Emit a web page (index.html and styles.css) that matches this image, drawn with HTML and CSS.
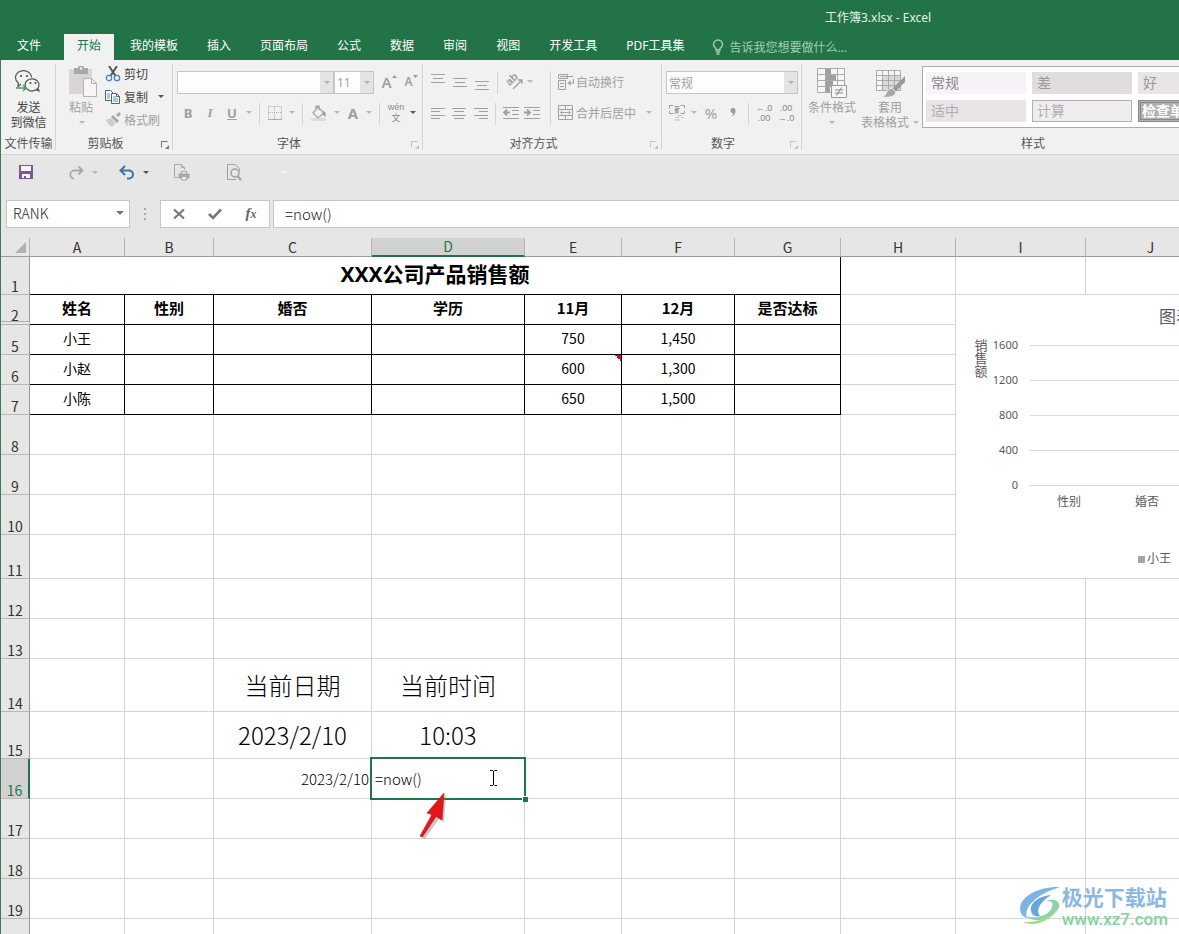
FILE: index.html
```html
<!DOCTYPE html>
<html lang="zh-CN">
<head>
<meta charset="utf-8">
<title>工作簿3.xlsx - Excel</title>
<link rel="stylesheet" href="styles.css">
</head>
<body>
<div class="app">
  <header class="titlebar">
    <div class="title">工作簿3.xlsx - Excel</div>
    <nav class="tabs">
      <button class="tab file">文件</button>
      <button class="tab active">开始</button>
      <button class="tab">我的模板</button>
      <button class="tab">插入</button>
      <button class="tab">页面布局</button>
      <button class="tab">公式</button>
      <button class="tab">数据</button>
      <button class="tab">审阅</button>
      <button class="tab">视图</button>
      <button class="tab">开发工具</button>
      <button class="tab">PDF工具集</button>
      <button class="tellme">
        <svg width="12" height="16" viewBox="0 0 12 16" fill="none" stroke="#a6cdb5" stroke-width="1.4"><path d="M4 11V9.500C2 8 1.500 7 1.500 5.500a4.500 4.500 0 0 1 9 0c0 1.500-.5 2.500-2.500 4V11zM4 13h4M4.500 15h3"/></svg>
        告诉我您想要做什么...
      </button>
    </nav>
  </header>

  <main class="body">
    <section class="ribbon">
      <div class="group g-wechat">
        <div class="tools">
          <button class="big on">
            <svg width="28" height="26" viewBox="0 0 28 26" fill="none" stroke="#555" stroke-width="1.200"><path d="M7 15l-3 2.500.4-3.500A8 7 0 1 1 17.500 8.500"/><path d="M13 20a7 6 0 1 1 9 .8l3 1.200-1.200-2.700M13 20a7 6 0 0 0 9 .8"/><path d="M2 19h10M9 16l3 3-3 3" stroke="#4a9c6d" stroke-width="1.500"/><g fill="#444" stroke="none"><circle cx="7" cy="7" r="1"/><circle cx="13" cy="7" r="1"/><circle cx="16.500" cy="14" r="1"/><circle cx="21.500" cy="14" r="1"/></g></svg>
            <span>发送</span><span>到微信</span>
          </button>
        </div>
        <footer><span>文件传输</span></footer>
      </div>

      <div class="group g-clip">
        <div class="tools">
          <button class="big paste">
            <svg width="28" height="32" viewBox="0 0 28 32"><path d="M0 3h23v25H0z" fill="#d8d4d8"/><path d="M5 2h4a3 3 0 0 1 6 0h4v6H5z" fill="#a8a8a8"/><circle cx="12" cy="2.500" r="1.200" fill="#f1f1f1"/><path d="M14.500 12.500h8l5 5v13h-13zM22.500 12.500v5h5" fill="#f8f4f8" stroke="#b5b0b5"/></svg>
            <span>粘贴</span><i class="caret"></i>
          </button>
          <div class="stack">
            <button class="line on"><svg width="16" height="16" viewBox="0 0 16 16" fill="none"><path d="M4 0l6.500 10M12 0L5.500 10" stroke="#555" stroke-width="2"/><circle cx="4" cy="12" r="2.700" stroke="#4a80c8" stroke-width="1.300"/><circle cx="12" cy="12" r="2.700" stroke="#4a80c8" stroke-width="1.300"/></svg>剪切</button>
            <button class="line on"><svg width="16" height="16" viewBox="0 0 16 16" fill="#fff" stroke="#56626e"><path d="M.5 1.500h5l3 3v7h-8z"/><path d="M6.500 4.500h5l3 3v7h-8zM11.500 4.500v3h3"/><path d="M2 5h3M2 7h3M2 9h3M8 8h3M8 10h5M8 12h5" stroke="#5b8cc8"/></svg>复制<i class="caret copycaret"></i></button>
            <button class="line"><svg width="16" height="16" viewBox="0 0 16 16"><path d="M1 8l5-2 5 5-4 4c-2-1-4-3-6-7z" fill="#d0ccd0"/><path d="M6 5l2-2 6 6-2 2zM11 3l3-3 2 2-3 3z" fill="#a6a6a6"/></svg>格式刷</button>
          </div>
        </div>
        <footer><span>剪贴板</span><button class="launch on" aria-label="剪贴板设置"></button></footer>
      </div>

      <div class="group g-font">
        <div class="rows">
          <div class="row">
            <div class="combo fontname"><input aria-label="字体"><i class="drop"></i></div>
            <div class="combo fontsize"><input aria-label="字号" value="11"><i class="drop"></i></div>
            <button class="ic w22 grow">A<svg width="5" height="3" viewBox="0 0 5 3"><path d="M0 3L2.500 0 5 3z" fill="#999"/></svg></button>
            <button class="ic w22 grow small">A<svg width="5" height="3" viewBox="0 0 5 3"><path d="M0 0h5L2.500 3z" fill="#999"/></svg></button>
          </div>
          <div class="row">
            <button class="ic w22 b">B</button><button class="ic w22 it">I</button><button class="ic w22 u">U</button><button class="ic w12"><i class="caret"></i></button>
            <i class="sep"></i>
            <button class="ic w22"><svg width="14" height="14" viewBox="0 0 14 14" fill="none" stroke="#aaa"><path d="M.5 .5h13v13H.5zM6.500 0v14M0 6.500h14" stroke-dasharray="1 1"/><path d="M0 13.500h14"/></svg></button><button class="ic w12"><i class="caret"></i></button>
            <i class="sep"></i>
            <button class="ic w24"><svg width="16" height="16" viewBox="0 0 16 16" fill="none"><path d="M0 13h15v3H0z" fill="#dedade"/><path d="M7 2l6 6-6 5-5-5zM5 5V1h3v4" stroke="#a0a0a0" stroke-width="1.200"/><path d="M12 6c3 1 3 3 2.500 6L11 9z" fill="#a0a0a0"/></svg></button><button class="ic w12"><i class="caret"></i></button>
            <button class="ic w20 fc">A</button><button class="ic w12"><i class="caret"></i></button>
            <i class="sep"></i>
            <button class="ic w24 pinyin"><span>wén</span><span>文</span></button><button class="ic w10 on"><i class="caret"></i></button>
          </div>
        </div>
        <footer><span>字体</span><button class="launch" aria-label="字体设置"></button></footer>
      </div>

      <div class="group g-align">
        <div class="tools">
          <div class="rows narrow">
            <div class="row">
              <button class="ic w22"><svg width="14" height="16" viewBox="0 0 14 16" stroke="#a0a0a0"><path d="M0 .5h14M2 4.500h10M0 8.500h14"/></svg></button><button class="ic w22"><svg width="14" height="16" viewBox="0 0 14 16" stroke="#a0a0a0"><path d="M0 4.500h14M2 8.500h10M0 12.500h14"/></svg></button><button class="ic w22"><svg width="14" height="16" viewBox="0 0 14 16" stroke="#a0a0a0"><path d="M0 7.500h14M2 11.500h10M0 15.500h14"/></svg></button>
              <i class="sep"></i>
              <button class="ic w22 orient"><span>ab</span><svg width="11" height="11" viewBox="0 0 11 11" fill="none" stroke="#a0a0a0" stroke-width="1.300"><path d="M1 10l9-9M6 1h4v4"/></svg></button><button class="ic w12"><i class="caret"></i></button>
            </div>
            <div class="row">
              <button class="ic w22"><svg width="14" height="16" viewBox="0 0 14 16" stroke="#a0a0a0"><path d="M0 3.500h14M0 6.500h9M0 10.500h14M0 13.500h9"/></svg></button><button class="ic w22"><svg width="14" height="16" viewBox="0 0 14 16" stroke="#a0a0a0"><path d="M0 3.500h14M2 6.500h10M0 10.500h14M2 13.500h10"/></svg></button><button class="ic w22"><svg width="14" height="16" viewBox="0 0 14 16" stroke="#a0a0a0"><path d="M0 3.500h14M5 6.500h9M0 10.500h14M5 13.500h9"/></svg></button>
              <i class="sep"></i>
              <button class="ic w22"><svg width="16" height="14" viewBox="0 0 16 14" stroke="#a0a0a0" fill="none"><path d="M0 1.500h16M9 4.500h7M9 8.500h7M0 12.500h16"/><path d="M7 6.500H1M4 3.500l-3 3 3 3" stroke-width="1.800"/></svg></button><button class="ic w22"><svg width="16" height="14" viewBox="0 0 16 14" stroke="#a0a0a0" fill="none"><path d="M0 1.500h16M9 4.500h7M9 8.500h7M0 12.500h16"/><path d="M0 6.500h6M3 3.500l3 3-3 3" stroke-width="1.800"/></svg></button>
            </div>
          </div>
          <i class="sep tall"></i>
          <div class="rows text">
            <button class="line"><svg width="16" height="16" viewBox="0 0 16 16" fill="none" stroke="#a0a0a0"><path d="M.5 .5h9v4h-9zM.5 6.500h7v9h-7zM2 2.500h13M2 9.500h4M2 12.500h4"/><path d="M15.500 5v4h-5M12.500 7l-2 2 2 2" stroke-width="1.200"/></svg>自动换行</button>
            <button class="line"><svg width="16" height="16" viewBox="0 0 16 16" fill="none" stroke="#a8a0a8"><path d="M.5 .5h14v14H.5zM.5 4.500h14M.5 10.500h14M7.500 .5v4M7.500 10.500v4M2.500 7.500h10M4.500 5.500l-2 2 2 2M10.500 5.500l2 2-2 2"/></svg>合并后居中<i class="caret mergecaret"></i></button>
          </div>
        </div>
        <footer><span>对齐方式</span><button class="launch" aria-label="对齐设置"></button></footer>
      </div>

      <div class="group g-num">
        <div class="rows">
          <div class="row">
            <div class="combo numfmt"><input aria-label="数字格式" value="常规"><i class="drop"></i></div>
          </div>
          <div class="row">
            <button class="ic w22"><svg width="16" height="16" viewBox="0 0 16 16" fill="none" stroke="#a0a0a0"><path d="M4.500 .5h-4v3M11.500 .5h4v3M.5 6v2.500h4M15.500 6v2.500h-4"/><path d="M5.500 1.500h5M5.500 8h3" /><path d="M10.500 3.500H7v3.500h3M5.500 5h4" stroke-width="1.500"/><path d="M9 10.500h4M12 12.500h3M6 12.500h4M5 15h6" stroke="#c4c4c4"/></svg></button><button class="ic w12"><i class="caret"></i></button>
            <button class="ic w22 pct">%</button><button class="ic w22" aria-label="千位分隔样式"><svg width="6" height="9" viewBox="0 0 6 9" fill="#999"><path d="M3 0a2.500 2.500 0 0 1 2.500 3C5.500 6 3.500 8 1 8.500 2.500 7.500 3 6.500 3 5A2.500 2.500 0 0 1 3 0z"/></svg></button>
            <i class="sep"></i>
            <button class="ic w22 dec"><span>←.0</span><span>.00</span></button><button class="ic w22 dec"><span>.00</span><span>→.0</span></button>
          </div>
        </div>
        <footer><span>数字</span><button class="launch" aria-label="数字设置"></button></footer>
      </div>

      <div class="group g-style">
        <div class="tools">
          <button class="big cond">
            <svg width="31" height="31" viewBox="0 0 31 31" fill="none" stroke="#aaa"><path d="M.5 .5h27v24H.5zM.5 6.500h27M.5 12.500h27M.5 18.500h27M8.500 .5v24M20.500 .5v24" fill="#f8f5f8"/><path d="M9 1h5v5H9zM9 7h10v5H9zM9 13h7v5H9zM9 19h4v5H9z" fill="#a0a0a0" stroke="none"/><path d="M14.500 17.500h15v12h-15z" fill="#f8f5f8" stroke="#999"/><path d="M18 22h8M18 25h8M24.500 19.500l-5 8" stroke="#888"/></svg>
            <span>条件格式</span><i class="caret"></i>
          </button>
          <button class="big tablefmt">
            <svg width="31" height="31" viewBox="0 0 31 31" fill="none" stroke="#aaa"><path d="M1.500 2.500h24v20h-24z" fill="#f8f5f8"/><path d="M8 8h18v15H8z" fill="#dcd8dc" stroke="none"/><path d="M1.500 2.500h24v20h-24zM1.500 7.500h24M1.500 12.500h24M1.500 17.500h24M7.500 2.500v20M13.500 2.500v20M19.500 2.500v20"/><path d="M30 8v6L20 24l-3-3z" fill="#999" stroke="none"/><path d="M17 20l4 4c-1 5-8 6-13 5 4-2 3-8 9-9z" fill="#a8a8a8" stroke="#f1f1f1"/></svg>
            <span>套用</span><span class="withcaret">表格格式<i class="caret"></i></span>
          </button>
          <div class="gallery">
            <button class="st plain">常规</button><button class="st bad">差</button><button class="st good">好</button>
            <button class="st mid">适中</button><button class="st calc">计算</button><button class="st check">检查单元格</button>
          </div>
        </div>
        <footer><span>样式</span></footer>
      </div>
    </section>

    <section class="qat">
      <button class="q q1" aria-label="保存"><svg width="16" height="16" viewBox="0 0 16 16"><path d="M1 1h14v14H1z" fill="#7a55a0"/><path d="M3 2h10v5H3zM4 10h8v4H4z" fill="#f7f3fa"/><path d="M6 12h2v3H6z" fill="#7a55a0"/></svg></button>
      <button class="q q2" aria-label="恢复"><svg width="15" height="15" viewBox="0 0 15 15" fill="none" stroke="#a8a8a8" stroke-width="1.800"><path d="M13 5.500H6a4 4 0 0 0-1 8.200M9.500 1.500l4 4-4 4"/></svg><i class="caret"></i></button>
      <button class="q q3 on" aria-label="撤消"><svg width="16" height="15" viewBox="0 0 16 15" fill="none" stroke="#3d74ad" stroke-width="2"><path d="M2 5.500h7.500a4 4 0 0 1 1 8H8M6 1L1.500 5.500 6 10"/></svg><i class="caret"></i></button>
      <button class="q q4" aria-label="快速打印"><svg width="17" height="17" viewBox="0 0 17 17" fill="none" stroke="#a8a8a8"><path d="M5 13.500H1.500V.5h7l3 3V6M8.500 .5v3h3"/><path d="M6 10h10v4H6z" fill="#a8a8a8"/><path d="M8.500 7.500h5V10h-5zM8.500 12.500h5v3.500h-5z" fill="#eee"/></svg></button>
      <button class="q q5" aria-label="打印预览"><svg width="16" height="17" viewBox="0 0 16 17" fill="none" stroke="#a0a0a0"><path d="M12.500 7V4.500l-4-4h-8v15h9"/><circle cx="8" cy="9" r="4" stroke-width="1.500"/><path d="M10.500 12l3.500 4" stroke-width="2"/></svg></button>
      <button class="q q6" aria-label="自定义快速访问工具栏"><i class="caret"></i></button>
    </section>

    <section class="fbar">
      <div class="namebox"><input aria-label="名称框" value="RANK"><i class="caret"></i></div>
      <svg class="dots" width="4" height="12" viewBox="0 0 4 12" fill="#aaa"><path d="M1 0h2v2H1zM1 5h2v2H1zM1 10h2v2H1z"/></svg>
      <div class="fbtns">
        <button aria-label="取消"><svg width="12" height="12" viewBox="0 0 12 12" stroke="#777" stroke-width="2.200"><path d="M1 1.500l10 9M11 1.500l-10 9"/></svg></button>
        <button aria-label="输入"><svg width="14" height="12" viewBox="0 0 14 12" fill="none" stroke="#777" stroke-width="2.600"><path d="M1 6l4 4 8-8.500"/></svg></button>
        <button aria-label="插入函数" class="fx">f<sub>x</sub></button>
      </div>
      <input class="formula" aria-label="编辑栏" value="=now()">
    </section>

    <section class="sheet">
      <table class="grid">
        <colgroup><col class="c0"><col class="cA"><col class="cB"><col class="cC"><col class="cD"><col class="cE"><col class="cF"><col class="cG"><col class="cH"><col class="cI"><col class="cI"></colgroup>
        <thead>
          <tr><th class="corner"><svg width="11" height="11" viewBox="0 0 11 11"><path d="M11 0v11H0z" fill="#b0b0b0"/></svg></th><th>A</th><th>B</th><th>C</th><th class="sel">D</th><th>E</th><th>F</th><th>G</th><th>H</th><th>I</th><th>J</th></tr>
        </thead>
        <tbody>
          <tr class="data h38"><th>1</th><td colspan="7" class="headline">XXX公司产品销售额</td><td></td><td></td><td></td></tr>
          <tr class="data heads"><th class="hiddenrows">2</th><td>姓名</td><td>性别</td><td>婚否</td><td>学历</td><td>11月</td><td>12月</td><td>是否达标</td><td class="free"></td><td class="free"></td><td class="free"></td></tr>
          <tr class="data"><th>5</th><td>小王</td><td></td><td></td><td></td><td>750</td><td>1,450</td><td></td><td class="free"></td><td class="free"></td><td class="free"></td></tr>
          <tr class="data"><th>6</th><td>小赵</td><td></td><td></td><td></td><td class="noted">600</td><td>1,300</td><td></td><td class="free"></td><td class="free"></td><td class="free"></td></tr>
          <tr class="data"><th>7</th><td>小陈</td><td></td><td></td><td></td><td>650</td><td>1,500</td><td></td><td class="free"></td><td class="free"></td><td class="free"></td></tr>
          <tr><th>8</th><td></td><td></td><td></td><td></td><td></td><td></td><td></td><td></td><td></td><td></td></tr>
          <tr><th>9</th><td></td><td></td><td></td><td></td><td></td><td></td><td></td><td></td><td></td><td></td></tr>
          <tr><th>10</th><td></td><td></td><td></td><td></td><td></td><td></td><td></td><td></td><td></td><td></td></tr>
          <tr class="h44"><th>11</th><td></td><td></td><td></td><td></td><td></td><td></td><td></td><td></td><td></td><td></td></tr>
          <tr><th>12</th><td></td><td></td><td></td><td></td><td></td><td></td><td></td><td></td><td></td><td></td></tr>
          <tr><th>13</th><td></td><td></td><td></td><td></td><td></td><td></td><td></td><td></td><td></td><td></td></tr>
          <tr class="h53 large"><th>14</th><td></td><td></td><td>当前日期</td><td>当前时间</td><td></td><td></td><td></td><td></td><td></td><td></td></tr>
          <tr class="h47 large"><th>15</th><td></td><td></td><td>2023/2/10</td><td>10:03</td><td></td><td></td><td></td><td></td><td></td><td></td></tr>
          <tr class="cur"><th class="selrow">16</th><td></td><td></td><td class="right">2023/2/10</td><td class="editing"><div class="editbox"><input aria-label="D16" value="=now()"><i class="handle"></i>
            <svg class="ibeam" width="9" height="16" viewBox="0 0 9 16" fill="none" stroke="#000"><path d="M1 .5h2.500l1 1 1-1H8M1 15.500h2.500l1-1 1 1H8M4.500 1v14"/></svg>
            <svg class="pointer" width="34" height="54" viewBox="0 0 34 54"><path d="M26 3L10 23l5 2L2 46l3 1 14-20 5 3z" fill="#888" opacity=".45" transform="translate(2 2)"/><path d="M26 3L9 23l5 1.500L2 46l2.500 1L18 26.500l6 3.500z" fill="#e8151b" stroke="#b01016" stroke-width=".6"/></svg></div></td><td></td><td></td><td></td><td></td><td></td><td></td></tr>
          <tr><th>17</th><td></td><td></td><td></td><td></td><td></td><td></td><td></td><td></td><td></td><td></td></tr>
          <tr><th>18</th><td></td><td></td><td></td><td></td><td></td><td></td><td></td><td></td><td></td><td></td></tr>
          <tr><th>19</th><td></td><td></td><td></td><td></td><td></td><td></td><td></td><td></td><td></td><td></td></tr>
          <tr><th></th><td></td><td></td><td></td><td></td><td></td><td></td><td></td><td></td><td></td><td></td></tr>
        </tbody>
      </table>

      <figure class="chart">
        <figcaption>图表标题</figcaption>
        <div class="plot">
          <div class="ytitle">销售额</div>
          <div class="axis">
            <div class="tick"><span>1600</span><i></i></div>
            <div class="tick"><span>1200</span><i></i></div>
            <div class="tick"><span>800</span><i></i></div>
            <div class="tick"><span>400</span><i></i></div>
            <div class="tick"><span>0</span><i></i></div>
          </div>
        </div>
        <div class="cats"><span>性别</span><span>婚否</span></div>
        <div class="legend"><i></i>小王</div>
      </figure>
    </section>
  </main>

  <aside class="mark">
    <svg width="42" height="40" viewBox="0 0 42 40" fill="none"><path d="M41 1C22 0 2 9 1 22c0 6 3 9 7 10C4 21 18 8 41 1z" fill="#7db4e6"/><path d="M32 9C20 10 11 17 12 24c0 5 4 7 9 6-5-6 1-15 11-21z" fill="#6aa6de"/><path d="M27 15c5 0 8 1 6 6-2 6-8 9-15 10-4 .6-8 0-11-1 6 8 28 4 33-9 2-6-6-9-13-6z" fill="#8fd0b0"/><path d="M4 36c11 5 28 0 35-14-5 8-20 15-35 14z" fill="#a4d98a"/></svg>
    <div><strong>极光下载站</strong><span>www.xz7.com</span></div>
  </aside>
</div>
</body>
</html>
```

FILE: styles.css
```css
* { box-sizing: border-box; }
body {
  margin: 0;
  font-family: "Noto Sans", "Noto Sans CJK SC", sans-serif;
  font-size: 12px;
  color: #444;
  overflow: hidden;
}
button { font: inherit; color: inherit; background: none; border: 0; padding: 0; margin: 0; }
input { font: inherit; color: inherit; border: 0; padding: 0; margin: 0; background: none; outline: 0; min-width: 0; }
svg { display: block; flex: none; }

.app { position: relative; height: 100vh; display: flex; flex-direction: column; overflow: hidden; background: #e6e6e6; }

/* title bar and tabs */
.titlebar { flex: none; background: #227447; color: #fff; }
.title { height: 34px; line-height: 36px; padding-left: 825px; white-space: nowrap; color: #e6f2ea; }
.tabs { display: flex; gap: 3px; height: 26px; padding-left: 4px; }
.tab { padding: 0 13px 2px; line-height: 22px; white-space: nowrap; }
.tab.file { margin-right: 7px; }
.tab.active { background: #f1f1f1; color: #227447; }
.tellme { display: flex; align-items: center; gap: 5px; padding-left: 12px; color: #a6cdb5; white-space: nowrap; }

.body { flex: 1; min-height: 0; display: flex; flex-direction: column; border-left: 1px solid #3f7a58; }

/* ribbon */
.ribbon { flex: none; display: flex; height: 95px; background: #f1f1f1; border-bottom: 1px solid #d2d2d2; overflow: hidden; }
.group { flex: none; position: relative; display: flex; flex-direction: column; padding-top: 6px; color: #a0a0a0; }
.group::after { content: ""; position: absolute; right: 0; top: 4px; bottom: 4px; width: 1px; background: #d5d5d5; }
.group footer { margin-top: auto; height: 20px; display: flex; justify-content: center; position: relative; line-height: 20px; color: #555; white-space: nowrap; }
.on { color: #444; }
.g-wechat { width: 55px; }
.g-clip { width: 117px; }
.g-clip footer { padding-right: 18px; }
.g-font { width: 250px; padding-left: 4px; }
.g-font footer { padding-right: 22px; }
.g-align { width: 239px; }
.g-align footer { padding-right: 18px; }
.g-num { width: 140px; padding-left: 4px; }
.g-num footer { padding-right: 22px; }
.g-style { width: 462px; }
.tools { display: flex; }
.g-wechat .tools { justify-content: center; }
.big { display: flex; flex-direction: column; align-items: center; line-height: 15px; white-space: nowrap; }
.big.on svg { margin: 3px 0 5px; }
.caret { display: inline-block; flex: none; border: 3px solid transparent; border-top-color: #b8b8b8; border-bottom: 0; }
.on .caret { border-top-color: #555; }
.big > .caret { margin-top: 6px; }
.paste { margin-left: 13px; width: 28px; align-items: flex-start; }
.paste svg { margin-bottom: 2px; }
.paste > .caret { margin-left: 10px; }
.stack { margin: -4px 0 0 8px; }
.line { display: flex; align-items: center; gap: 3px; height: 23px; white-space: nowrap; }
.copycaret { margin-left: 7px; }
.mergecaret { margin-left: 8px; }
.launch { position: absolute; right: 5px; top: 7px; width: 7px; height: 7px; border: 1px solid #c4c4c4; border-right-color: transparent; border-bottom-color: transparent; color: #c4c4c4; }
.launch::after { content: ""; position: absolute; left: 3px; top: 3px; border: 2px solid currentColor; border-top-color: transparent; border-left-color: transparent; }
.launch.on { border-left-color: #777; border-top-color: #777; color: #777; }

.rows { display: flex; flex-direction: column; gap: 8px; padding-top: 5px; }
.row { display: flex; align-items: center; height: 23px; }
.ic { display: flex; align-items: center; justify-content: center; height: 23px; padding-bottom: 2px; }
.w10 { width: 10px; }
.w12 { width: 12px; }
.w20 { width: 20px; }
.w22 { width: 22px; }
.w24 { width: 24px; }
.sep { flex: none; width: 1px; height: 22px; background: #d5d5d5; margin: 0 4px; }
.sep.tall { height: 54px; margin: 5px 7px 0; }
.combo { display: flex; height: 23px; border: 1px solid #c6c6c6; background: #fdfdfd; color: #a0a0a0; }
.combo input { flex: 1; padding-left: 2px; }
.drop { flex: none; width: 13px; background: #e4e4e4; display: flex; align-items: center; justify-content: center; }
.drop::after { content: ""; border: 3px solid transparent; border-top-color: #b0b0b0; border-bottom: 0; }
.fontname { width: 157px; }
.fontsize { width: 40px; margin-right: 4px; }
.numfmt { width: 132px; }
.grow { font-size: 15px; font-weight: 600; }
.grow svg { align-self: flex-start; margin-top: 4px; }
.grow.small { font-size: 12px; }
.b, .u, .fc { font-weight: 700; }
.b, .u, .it { font-size: 13px; }
.u { text-decoration: underline; }
.it { font-style: italic; font-weight: 700; font-family: "Liberation Serif", serif; }
.fc { font-size: 15px; }
.pinyin { flex-direction: column; font: 9px/11px "Liberation Sans", "Noto Sans CJK SC", sans-serif; color: #888; }
.pinyin span + span { line-height: 10px; }
.orient { position: relative; }
.orient span { position: absolute; left: 3px; top: 2px; font: 700 11px/12px "Liberation Sans", sans-serif; transform: rotate(-45deg); }
.orient svg { margin: 6px 0 0 8px; }
.pct { font-size: 15px; }
.dec { flex-direction: column; font: 9px/10px "Liberation Sans", sans-serif; color: #888; }
.narrow { width: 120px; padding-left: 4px; }
.text .line { gap: 2px; padding-bottom: 2px; }
.cond { margin-left: 5px; width: 50px; }
.tablefmt { margin-left: 4px; width: 56px; align-items: flex-start; }
.tablefmt svg { margin-left: 14px; }
.tablefmt span { margin-left: 17px; }
.tablefmt .withcaret { margin-left: 0; display: flex; align-items: center; gap: 4px; }
.cond svg, .tablefmt svg { margin-top: 2px; margin-bottom: 1px; }
.gallery { flex: none; margin-left: 5px; height: 62px; border: 1px solid #ababab; background: #fff; padding: 5px 3px; display: grid; grid-template-columns: 100px 100px 100px; grid-auto-rows: 22px; column-gap: 6px; row-gap: 6px; width: 330px; }
.st { text-align: left; padding-left: 5px; font-size: 14px; line-height: 20px; overflow: hidden; white-space: nowrap; background: #e8e4e8; color: #b0acb0; }
.st.plain { background: #f6f2f8; color: #888; }
.st.bad { background: #e0dce0; color: #999; }
.st.good { color: #999; }
.st.calc { border: 1px solid #b0b0b0; background: #f0ecf0; padding-left: 4px; line-height: 18px; }
.st.check { border: 3px double #888; background: #b4b0b4; color: #fff; font-weight: 700; padding-left: 1px; line-height: 14px; }

/* quick access toolbar */
.qat { flex: none; display: flex; align-items: center; height: 34px; padding-left: 17px; }
.q { display: flex; align-items: center; gap: 8px; }
.q2 { margin-left: 35px; }
.q3 { margin-left: 21px; }
.q4 { margin-left: 24px; }
.q5 { margin-left: 37px; }
.q6 { margin-left: 38px; }
.q6 .caret { border-top-color: #f4f4f4; }

/* formula bar */
.fbar { flex: none; display: flex; align-items: center; height: 28px; margin: 11px 0 10px; padding-left: 5px; font: 15px/20px "Noto Sans CJK SC", sans-serif; font-weight: 300; color: #222; }
.namebox { width: 124px; height: 28px; display: flex; align-items: center; padding: 0 5px 2px 6px; background: #fff; border: 1px solid #c6c6c6; font-size: 14px; }
.namebox input { flex: 1; }
.namebox .caret { border-width: 4px 4px 0; border-top-color: #777; }
.dots { margin: 0 13px; }
.fbtns { display: flex; width: 110px; height: 28px; background: #fff; border: 1px solid #c6c6c6; }
.fbtns button { flex: 1; display: flex; align-items: center; justify-content: center; }
.fbtns .fx { font: italic 700 15px "Liberation Serif", serif; color: #666; align-items: baseline; line-height: 24px; }
.fx sub { font-size: 12px; line-height: 1; }
.formula { flex: 1; height: 28px; margin-left: 3px; padding: 0 0 2px 11px; background: #fff; border: 1px solid #c6c6c6; border-right: 0; }

/* worksheet */
.sheet { flex: 1; min-height: 0; position: relative; overflow: hidden; background: #fff; }
.grid { table-layout: fixed; width: 1215px; border-collapse: separate; border-spacing: 0; font: 14px/20px "Noto Sans CJK SC", sans-serif; color: #000; }
.c0 { width: 29px; }
.cA { width: 95px; }
.cB { width: 89px; }
.cC { width: 158px; }
.cD { width: 153px; }
.cE { width: 97px; }
.cF { width: 113px; }
.cG { width: 106px; }
.cH { width: 115px; }
.cI { width: 130px; }
.grid th, .grid td { padding: 0; }
.grid th { font-weight: 400; color: #333; background: #e6e6e6; }
.grid thead th { height: 19px; line-height: 17px; border-right: 1px solid #b4b4b4; border-bottom: 1px solid #9a9a9a; vertical-align: bottom; }
.grid thead th.sel { background: #d2d2d2; color: #227447; border-bottom: 2px solid #227447; }
.corner svg { margin: 0 0 3px 14px; }
.grid tbody tr { height: 40px; }
.grid tbody tr.data { height: 30px; }
.grid tbody tr.h38 { height: 38px; }
.grid tbody tr.h44 { height: 44px; }
.grid tbody tr.h53 { height: 53px; }
.grid tbody tr.h47 { height: 47px; }
.grid tbody th { vertical-align: bottom; line-height: 16px; border-right: 1px solid #9a9a9a; border-bottom: 1px solid #b8b8b8; }
.grid tbody th.hiddenrows { border-bottom: 4px double #b0b0b0; line-height: 12px; }
.grid tbody th.selrow { background: #d2d2d2; color: #227447; border-right: 2px solid #227447; }
.grid td { text-align: center; vertical-align: middle; border-right: 1px solid #d4d4d4; border-bottom: 1px solid #d4d4d4; white-space: nowrap; }
.grid tr.data td { padding-bottom: 3px; }
.grid tr.data td:nth-child(-n+8):not(.free) { border-color: #000; }
.grid tr.h38 td:nth-child(n+3) { border-color: #d4d4d4 !important; }
.grid .heads td { font-size: 15px; font-weight: 700; }
.grid .headline { font: 700 21px/28px "Noto Sans", "Noto Sans CJK SC", sans-serif; }
.grid .large td { font-size: 24px; font-weight: 300; line-height: 32px; }
.grid .right { text-align: right; font-size: 15px; font-weight: 300; padding-right: 2px; }
.noted { background: linear-gradient(45deg, transparent 50%, #c8141a 50%) top right / 6px 6px no-repeat; }
.editing { position: relative; }
.editbox { position: absolute; left: -2px; right: -2px; top: -2px; bottom: -2px; border: 2px solid #227447; background: #fff; display: flex; z-index: 1; }
.editbox input { flex: 1; padding-left: 3px; font-size: 15px; font-weight: 300; }
.handle { position: absolute; right: -4px; bottom: -4px; width: 6px; height: 6px; background: #227447; border: 1px solid #fff; border-right: 0; border-bottom: 0; }
.ibeam { position: absolute; left: 117px; top: 11px; }
.pointer { position: absolute; left: 46px; top: 31px; }

/* chart placed over the cells */
.chart { position: absolute; left: 955px; top: 57px; width: 470px; height: 283px; margin: 0; background: #fff; color: #595959; display: flex; flex-direction: column; }
.chart figcaption { font-size: 17px; line-height: 23px; padding: 10px 0 0 203px; }
.plot { display: flex; padding-left: 18px; }
.ytitle { width: 14px; margin-top: 11px; font-size: 13px; line-height: 13px; text-align: center; }
.axis { flex: 1; }
.tick { display: flex; align-items: center; height: 35px; }
.tick span { width: 30px; text-align: right; font-size: 11px; line-height: 15px; padding-bottom: 2px; }
.tick i { flex: 1; height: 1px; margin-left: 12px; background: #d9d9d9; }
.cats { display: flex; padding-left: 74px; line-height: 16px; margin-top: -9px; }
.cats span { width: 78px; text-align: center; }
.legend { display: flex; align-items: center; gap: 2px; padding-left: 182px; margin-top: 40px; line-height: 18px; }
.legend i { width: 7px; height: 7px; background: #a5a5a5; }

.mark { position: absolute; right: 11px; bottom: 6px; display: flex; align-items: center; gap: 1px; z-index: 2; }
.mark div { display: flex; flex-direction: column; }
.mark strong { font: 700 21px/24px "Noto Sans CJK SC", sans-serif; color: #8ab8e2; padding-bottom: 3px; }
.mark span { font: 500 17px/17px Roboto, sans-serif; color: #84d29c; }
```
